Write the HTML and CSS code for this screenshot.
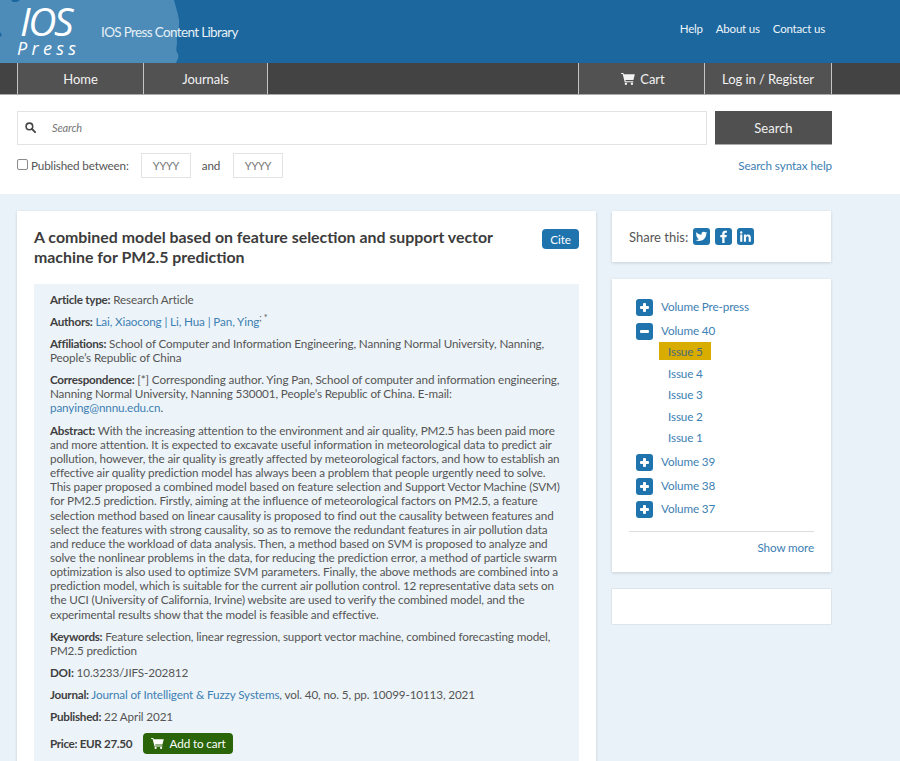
FILE: index.html
```html
<!DOCTYPE html>
<html lang="en">
<head>
<meta charset="utf-8">
<title>IOS Press Content Library</title>
<link rel="stylesheet" href="styles.css">
</head>
<body>
<svg width="0" height="0" class="defs">
  <symbol id="cart" viewBox="0 0 16 14"><path d="M0 0h2.6l.5 1.6H16l-1.700 6.600H5l.3 1.300h8.900v1.200H4.200L1.800 1.200H0z" fill="currentColor"/><circle cx="5.600" cy="12.600" r="1.400" fill="currentColor"/><circle cx="12.600" cy="12.600" r="1.400" fill="currentColor"/></symbol>
</svg>
<header class="top">
  <svg class="land" viewBox="0 0 180 63" preserveAspectRatio="none" aria-hidden="true"><path d="M0 0H174C176 8 178 13 179 20C180 28 176 34 177 42C177 47 175 50 178 54C179 58 177 60 176 63H0Z" fill="#4d8cb9"/><path d="M11 0h9l-3 2h-4zM0 32l2 3-2 2z" fill="#1b679e"/></svg>
  <div class="logo"><span class="logo-ios">IOS</span><span class="logo-press">Press</span></div>
  <div class="site-name">IOS Press Content Library</div>
  <nav class="top-links"><a>Help</a><a>About us</a><a>Contact us</a></nav>
</header>
<nav class="menu">
  <a class="menu-item wide">Home</a><a class="menu-item narrow">Journals</a>
  <span class="menu-space"></span>
  <a class="menu-item wide cart-item"><svg class="cart-icon"><use href="#cart"/></svg>Cart</a><a class="menu-item login">Log in / Register</a>
</nav>
<section class="search">
  <div class="search-row">
    <div class="search-box">
      <svg class="search-icon" viewBox="0 0 14 14"><circle cx="5.600" cy="5.600" r="4.200" fill="none" stroke="#444" stroke-width="2"/><path d="M8.800 8.800l4 4" stroke="#444" stroke-width="2.400" stroke-linecap="round"/></svg>
      <span class="search-placeholder">Search</span>
    </div>
    <button class="search-btn">Search</button>
  </div>
  <div class="filter-row">
    <span class="check"></span><span class="filter-label">Published between:</span>
    <span class="year">YYYY</span><span class="and">and</span><span class="year">YYYY</span>
    <a class="syntax">Search syntax help</a>
  </div>
</section>
<main class="main">
  <article class="card article">
    <div class="title-row">
      <h1>A combined model based on feature selection and support vector<br>machine for PM2.5 prediction</h1>
      <a class="cite">Cite</a>
    </div>
    <div class="meta">
      <p><b>Article type:</b> Research Article</p>
      <p><b>Authors:</b> <a>Lai, Xiaocong</a> <a>|</a> <a>Li, Hua</a> <a>|</a> <a>Pan, Ying</a><sup class="aff">; *</sup></p>
      <p><b>Affiliations:</b> School of Computer and Information Engineering, Nanning Normal University, Nanning,<br>People’s Republic of China</p>
      <p><b>Correspondence:</b> [*] Corresponding author. Ying Pan, School of computer and information engineering,<br>Nanning Normal University, Nanning 530001, People’s Republic of China. E-mail:<br><a>panying@nnnu.edu.cn</a>.</p>
      <p><b>Abstract:</b> With the increasing attention to the environment and air quality, PM2.5 has been paid more<br>and more attention. It is expected to excavate useful information in meteorological data to predict air<br>pollution, however, the air quality is greatly affected by meteorological factors, and how to establish an<br>effective air quality prediction model has always been a problem that people urgently need to solve.<br>This paper proposed a combined model based on feature selection and Support Vector Machine (SVM)<br>for PM2.5 prediction. Firstly, aiming at the influence of meteorological factors on PM2.5, a feature<br>selection method based on linear causality is proposed to find out the causality between features and<br>select the features with strong causality, so as to remove the redundant features in air pollution data<br>and reduce the workload of data analysis. Then, a method based on SVM is proposed to analyze and<br>solve the nonlinear problems in the data, for reducing the prediction error, a method of particle swarm<br>optimization is also used to optimize SVM parameters. Finally, the above methods are combined into a<br>prediction model, which is suitable for the current air pollution control. 12 representative data sets on<br>the UCI (University of California, Irvine) website are used to verify the combined model, and the<br>experimental results show that the model is feasible and effective.</p>
      <p><b>Keywords:</b> Feature selection, linear regression, support vector machine, combined forecasting model,<br>PM2.5 prediction</p>
      <p><b>DOI:</b> 10.3233/JIFS-202812</p>
      <p><b>Journal:</b> <a>Journal of Intelligent &amp; Fuzzy Systems</a>, vol. 40, no. 5, pp. 10099-10113, 2021</p>
      <p><b>Published:</b> 22 April 2021</p>
      <div class="price"><b>Price: EUR 27.50</b><a class="add"><svg class="add-icon"><use href="#cart"/></svg>Add to cart</a></div>
    </div>
  </article>
  <aside class="side">
    <div class="card share">
      <span class="share-label">Share this:</span>
      <a class="soc"><svg viewBox="0 0 16 16"><path d="M13.500 4.600c-.4.2-.8.3-1.300.4.5-.3.8-.7 1-1.200-.4.3-.9.4-1.400.5a2.200 2.200 0 0 0-3.800 2C6 6.200 4.400 5.300 3.200 3.900c-.6 1.100-.3 2.300.7 3-.4 0-.7-.1-1-.3 0 1.100.8 2 1.800 2.200-.3.100-.7.100-1 0 .3.900 1.100 1.500 2.100 1.500-1 .8-2.200 1.100-3.300 1 3.100 1.900 9.900.8 10.100-6.400.4-.3.700-.6.900-.3z" fill="#fff"/></svg></a>
      <a class="soc"><svg viewBox="0 0 16 16"><path d="M9 14V8.800h1.800l.3-2.100H9V5.500c0-.6.200-1 1-1h1.200V2.600c-.5-.1-1-.1-1.600-.1-1.700 0-2.800 1-2.800 2.800v1.400H5v2.100h1.800V14z" fill="#fff"/></svg></a>
      <a class="soc"><svg viewBox="0 0 16 16"><path d="M3 6.200h2V13H3zM4 3a1.100 1.100 0 1 1 0 2.300A1.100 1.100 0 0 1 4 3zM6.500 6.200h1.900v.9c.4-.6 1.100-1.100 2.100-1.100 2 0 2.500 1.300 2.500 3.100V13h-2V9.500c0-.8-.1-1.800-1.200-1.800s-1.300.9-1.300 1.800V13h-2z" fill="#fff"/></svg></a>
    </div>
    <div class="card volumes">
      <div class="vol"><span class="tog"></span><a>Volume Pre-press</a></div>
      <div class="vol"><span class="tog minus"></span><a>Volume 40</a></div>
      <ul class="issues">
        <li><a class="current">Issue 5</a></li>
        <li><a>Issue 4</a></li>
        <li><a>Issue 3</a></li>
        <li><a>Issue 2</a></li>
        <li><a>Issue 1</a></li>
      </ul>
      <div class="vol"><span class="tog"></span><a>Volume 39</a></div>
      <div class="vol"><span class="tog"></span><a>Volume 38</a></div>
      <div class="vol"><span class="tog"></span><a>Volume 37</a></div>
      <div class="more"><a>Show more</a></div>
    </div>
    <div class="card empty"></div>
  </aside>
</main>
</body>
</html>
```

FILE: styles.css
```css
* { box-sizing: border-box; }
html, body { height: 761px; overflow: hidden; }
body { margin: 0; font-family: "Lato", "Noto Sans", sans-serif; font-size: 11.7px; letter-spacing: -.13px; color: #555; background: #e8f2f8; white-space: nowrap; }
a { color: #3d80b3; text-decoration: none; }
.defs { position: absolute; }
p { margin: 0 0 8px; }

.top { position: relative; height: 63px; background: #1b679e; display: flex; color: #fff; overflow: hidden; }
.land { position: absolute; left: 0; top: 0; width: 180px; height: 63px; }
.logo { position: relative; width: 84px; margin-left: 17px; display: flex; flex-direction: column; color: #fff; letter-spacing: 0; }
.logo-ios { font: italic 400 39px/37px "Open Sans", sans-serif; margin: 2px 0 0 3px; letter-spacing: -2.300px; }
.logo-press { font: italic 400 18px/19px "Open Sans", sans-serif; letter-spacing: 4.300px; }
.site-name { position: relative; font-size: 13.500px; letter-spacing: -.65px; margin-top: 24px; color: #e6f0f6; }
.top-links { position: relative; margin-left: auto; margin-right: 75px; display: flex; gap: 13px; padding-top: 22px; font-size: 11.500px; letter-spacing: -.2px; }
.top-links a { color: #edf3f8; }

.menu { height: 32px; background: #434343; border-bottom: 1px solid #aaa; display: flex; padding-left: 17px; padding-right: 68px; letter-spacing: -.05px; }
.menu-item { display: flex; align-items: center; justify-content: center; background: #525252; color: #f2f2f2; font-size: 13px; height: 31px; border-left: 1px solid #c4c4c4; }
.wide { width: 126px; }
.narrow { width: 125px; border-right: 1px solid #c4c4c4; }
.menu-space { flex: 1; }
.login { width: 128px; border-right: 1px solid #c4c4c4; }
.cart-icon { width: 14px; height: 12px; margin-right: 5px; margin-left: 3px; }

.search { background: #fff; height: 99px; padding: 16px 68px 0 17px; }
.search-row { display: flex; gap: 8px; }
.search-box { flex: 1; height: 34px; border: 1px solid #e3e3e3; display: flex; align-items: center; padding-left: 7px; }
.search-icon { width: 11px; height: 11px; margin-top: -1px; }
.search-placeholder { margin-left: 16px; margin-top: -1px; font-style: italic; font-size: 11px; color: #777; }
.search-btn { width: 117px; height: 34px; border: 0; border-bottom: 1px solid #aaa; background: #505050; color: #f0f0f0; font: 13px "Lato", sans-serif; }
.filter-row { display: flex; align-items: center; margin-top: 8px; height: 25px; }
.check { width: 11px; height: 11px; border: 1px solid #8a8a8a; border-radius: 2px; margin-right: 3px; margin-bottom: 2px; }
.filter-label { width: 110px; margin-bottom: 2px; letter-spacing: -.16px; }
.year { width: 50px; height: 25px; border: 1px solid #e3e3e3; display: flex; align-items: center; justify-content: center; font-size: 11px; letter-spacing: -.3px; color: #777; }
.and { width: 42px; padding-right: 2px; margin-bottom: 2px; text-align: center; }
.syntax { margin-left: auto; margin-bottom: 2px; letter-spacing: -.1px; }

.main { display: flex; gap: 16px; padding: 17px 68px 0 17px; }
.card { background: #fff; box-shadow: 0 1px 3px rgba(0, 0, 0, .14); }
.article { width: 579px; height: 700px; padding: 17px; flex: none; }
.title-row { display: flex; justify-content: space-between; align-items: flex-start; min-height: 56px; }
h1 { margin: -1px 0 0; font-size: 15.900px; letter-spacing: 0; line-height: 20px; font-weight: 700; color: #3c3c3c; }
.cite { background: #1f74ad; color: #fff; border-radius: 4px; width: 37px; height: 20px; margin-top: 1px; display: flex; align-items: center; justify-content: center; }
.meta { background: #edf4f9; height: 520px; padding: 7.500px 16px; line-height: 14.150px; }
.meta b { color: #3f3f3f; letter-spacing: -.27px; }
.aff { font-size: 9px; line-height: 0; }
.price { display: flex; align-items: center; gap: 11px; margin-top: 9px; height: 21px; }
.price b { letter-spacing: -.35px; }
.add { display: flex; align-items: center; justify-content: center; background: #2b6509; color: #fff; width: 90px; height: 21px; border-radius: 4px; }
.add-icon { width: 13px; height: 11px; margin-right: 6px; }

.side { width: 219px; flex: none; display: flex; flex-direction: column; gap: 17px; }
.share { height: 51px; display: flex; align-items: center; padding-left: 17px; gap: 5px; }
.share-label { font-size: 13px; letter-spacing: 0; }
.soc { width: 17px; height: 17px; border-radius: 3px; background: #1f74ad; display: flex; }
.soc svg { width: 17px; height: 17px; }
.volumes { height: 293px; padding: 20px 17px 0; display: flex; flex-direction: column; }
.vol { display: flex; align-items: flex-start; height: 23.600px; gap: 8px; padding-left: 7px; }
.tog { position: relative; width: 17px; height: 17px; border-radius: 3px; background: #1f74ad; flex: none; }
.tog::before { content: ""; position: absolute; left: 4px; top: 7px; width: 9px; height: 3px; background: #fff; border-radius: 1px; }
.tog::after { content: ""; position: absolute; left: 7px; top: 4px; width: 3px; height: 9px; background: #fff; border-radius: 1px; }
.tog.minus::after { display: none; }
.vol a { line-height: 14px; }
.issues { list-style: none; margin: -6px 0 6px; padding: 0 0 0 30px; }
.issues li { height: 21.600px; display: flex; align-items: center; }
.issues a { padding: 0 9px; height: 16px; display: flex; align-items: center; }
.issues a.current { background: #d9ad00; color: #4a6a78; width: 52px; height: 18px; }
.more { border-top: 1px solid #ddd; margin-top: 6px; padding-top: 8px; text-align: right; }
.empty { height: 35px; box-shadow: 0 0 1px rgba(0, 0, 0, .3); }
```
